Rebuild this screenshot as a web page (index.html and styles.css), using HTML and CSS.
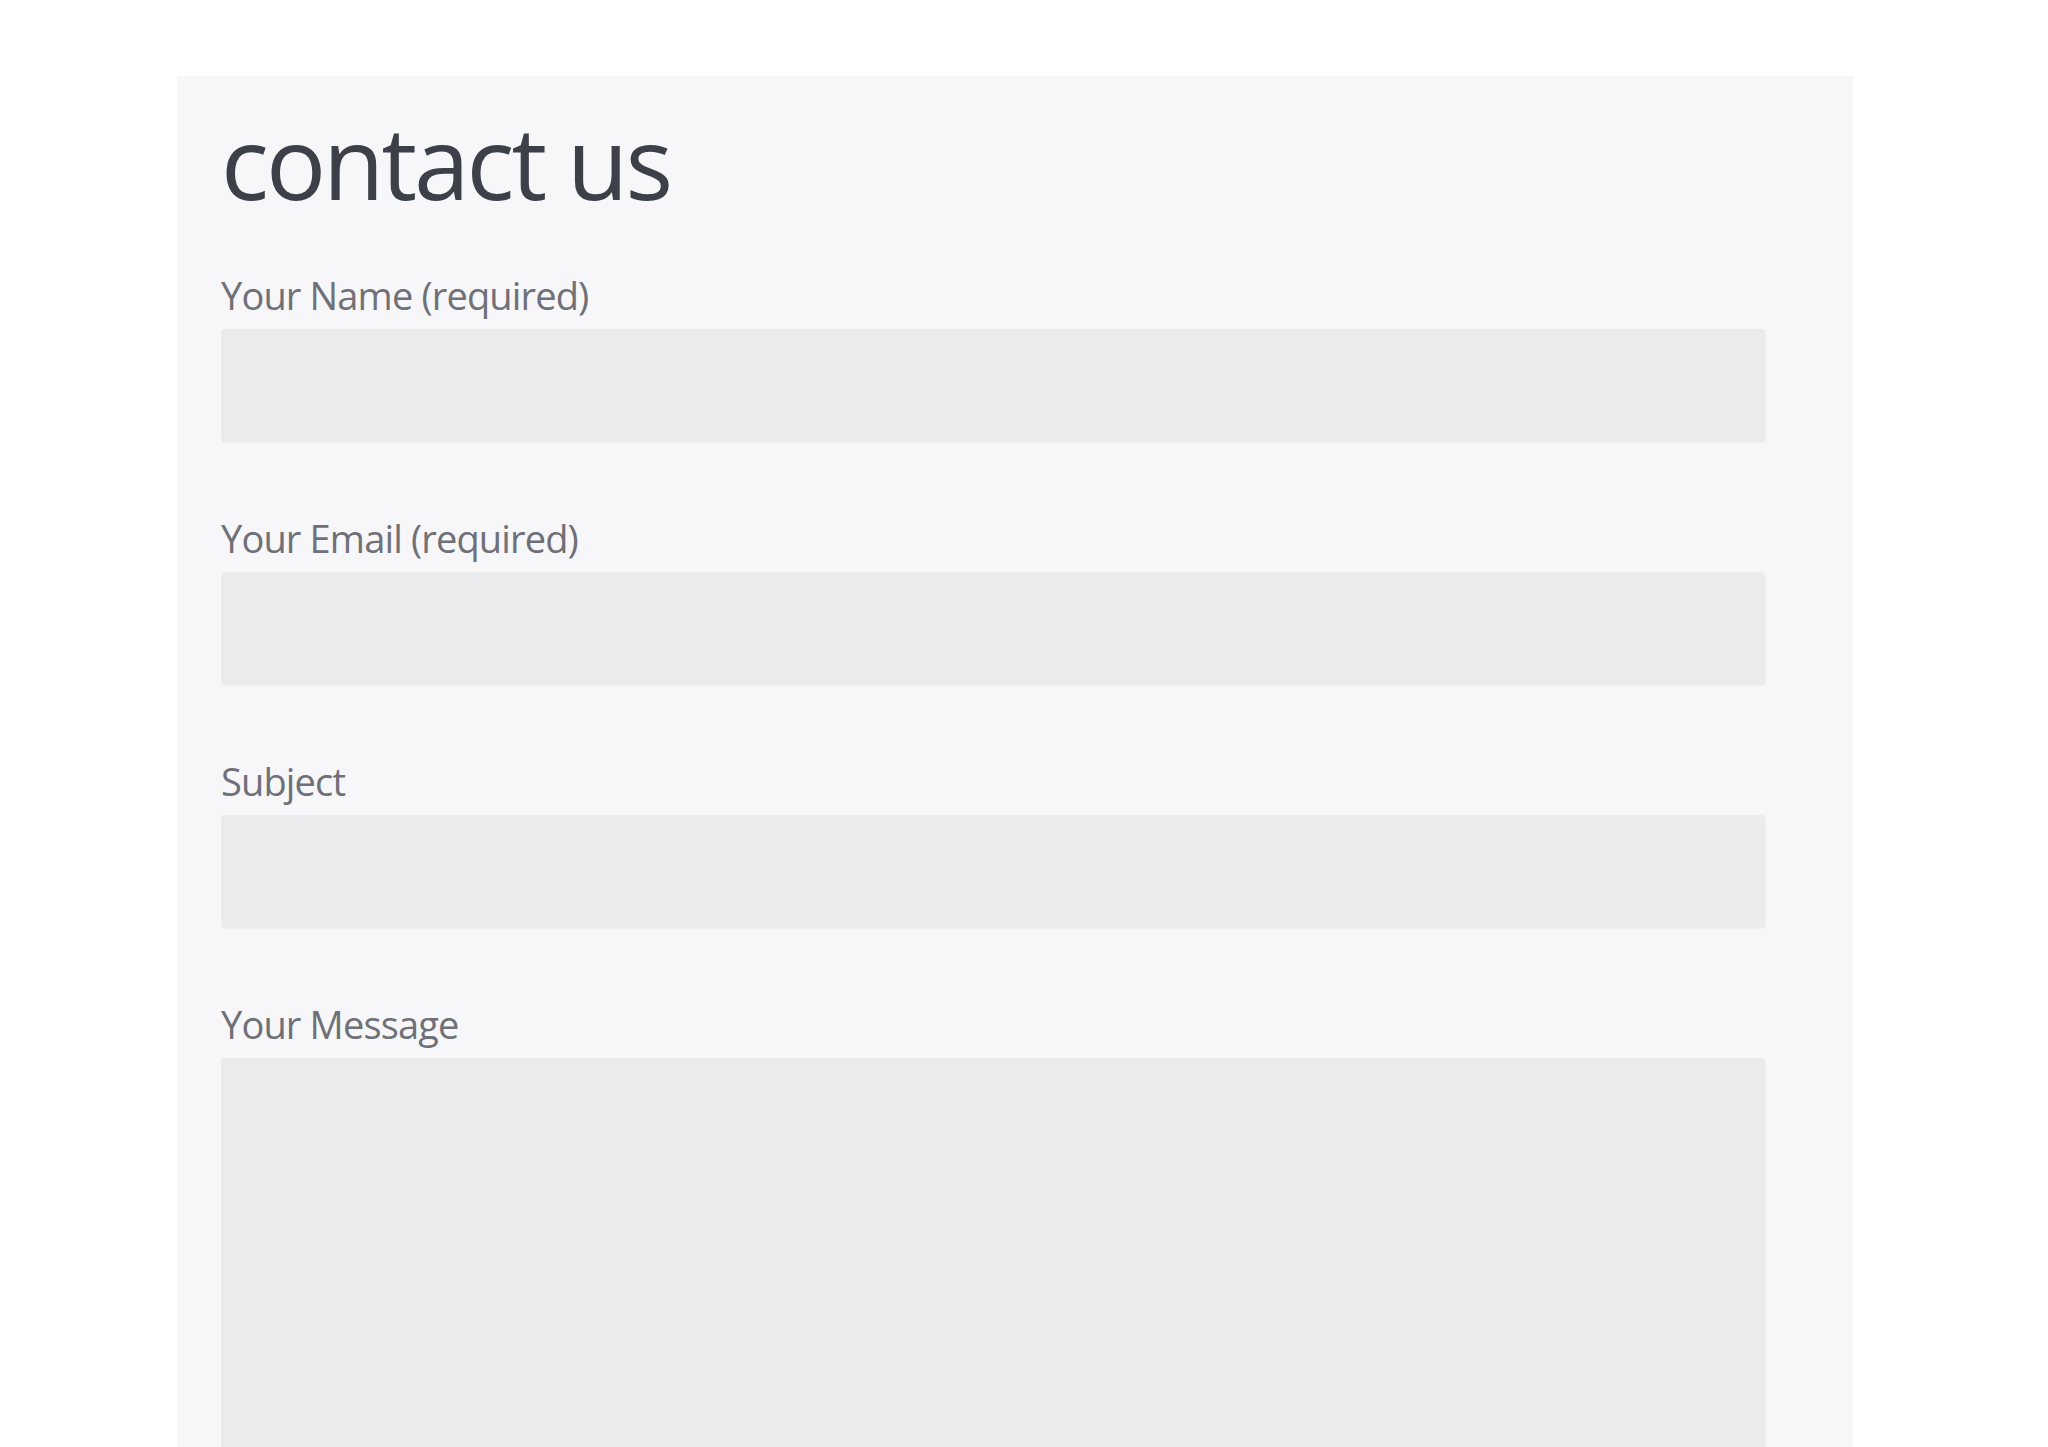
FILE: index.html
```html
<!DOCTYPE html>
<html lang="en">
<head>
<meta charset="utf-8">
<title>contact us</title>
<link rel="stylesheet" href="styles.css">
</head>
<body>
<main class="panel">
  <h1 class="title">contact us</h1>
  <form class="form">
    <label class="field">
      <span class="label">Your Name (required)</span>
      <input class="input" type="text">
    </label>
    <label class="field">
      <span class="label">Your Email (required)</span>
      <input class="input" type="email">
    </label>
    <label class="field">
      <span class="label">Subject</span>
      <input class="input" type="text">
    </label>
    <label class="field">
      <span class="label">Your Message</span>
      <textarea class="input textarea"></textarea>
    </label>
  </form>
</main>
</body>
</html>
```
FILE: styles.css
```css
html, body {
  margin: 0;
  padding: 0;
  background: #ffffff;
  overflow: hidden;
}
body {
  font-family: "Open Sans", "DejaVu Sans", sans-serif;
}
.panel {
  margin: 76px 0 0 177px;
  width: 1676px;
  min-height: 1400px;
  box-sizing: border-box;
  padding: 25px 88px 0 44px;
  background: #f7f7f9;
}
.title {
  margin: 0 0 0 0;
  font-size: 100px;
  line-height: 120px;
  font-weight: 400;
  color: #3e4049;
  letter-spacing: -3px;
}
.form {
  display: flex;
  flex-direction: column;
  margin-top: 48px;
}
.field {
  display: flex;
  flex-direction: column;
  margin-bottom: 70px;
}
.label {
  display: block;
  font-size: 38px;
  line-height: 53px;
  color: #6f7078;
  margin-bottom: 7px;
  letter-spacing: -0.85px;
}
.input {
  display: block;
  box-sizing: border-box;
  width: 100%;
  height: 113px;
  margin: 0;
  border: none;
  border-radius: 4px;
  background: #ebebed;
  box-shadow: 1px 1px 1px rgba(0,0,0,0.03);
  font: inherit;
  outline: none;
}
.textarea {
  height: 400px;
  resize: none;
}
```
